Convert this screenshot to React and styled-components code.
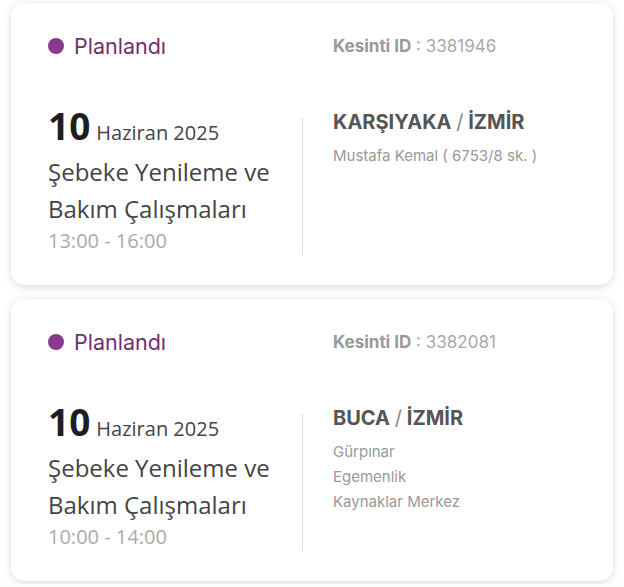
import React from "react";
import styled, { createGlobalStyle } from "styled-components";

const GlobalStyle = createGlobalStyle`
  html, body {
    margin: 0;
    padding: 0;
    background: #ffffff;
  }
`;

const List = styled.div`
  display: flex;
  flex-direction: column;
  gap: 14px;
  padding: 3px 11px;
`;

const Card = styled.div`
  background: #fff;
  border-radius: 14px;
  box-shadow: 0 2px 8px rgba(0, 0, 0, 0.14);
  padding: 28px 37px 30px 37px;
`;

const TopRow = styled.div`
  display: grid;
  grid-template-columns: 254px 1fr;
  align-items: center;
  height: 30px;
`;

const Status = styled.div`
  display: flex;
  align-items: center;
  gap: 10px;
  font-family: "Inter", "Lato", sans-serif;
  font-size: 21.5px;
  color: #6f2f72;
`;

const Dot = styled.span`
  width: 16px;
  height: 16px;
  border-radius: 50%;
  background: #8a3a8e;
`;

const OutageId = styled.div`
  padding-left: 31px;
  font-family: "Inter", "Lato", sans-serif;
  font-size: 17px;
  color: #aaa;

  b {
    color: #999;
    font-weight: 700;
  }
`;

const BodyRow = styled.div`
  display: grid;
  grid-template-columns: 254px 1px 1fr;
  margin-top: 45px;
`;

const DateCol = styled.div`
  font-family: "Open Sans", "Noto Sans", sans-serif;
  color: #444;
`;

const DateLine = styled.div`
  display: flex;
  align-items: baseline;
  gap: 6px;
  line-height: 40px;
`;

const Day = styled.span`
  font-size: 37px;
  font-weight: 700;
  color: #1e1e1e;
`;

const Month = styled.span`
  font-size: 20px;
  color: #444;
`;

const Title = styled.div`
  font-size: 24px;
  line-height: 37px;
  color: #444;
`;

const Time = styled.div`
  font-size: 20px;
  line-height: 28px;
  color: #aaa;
`;

const Divider = styled.div`
  background: #ddd;
  margin-top: 12px;
`;

const PlaceCol = styled.div`
  padding-left: 30px;
  font-family: "Inter", "Lato", sans-serif;
`;

const Place = styled.div`
  font-size: 20px;
  font-weight: 700;
  line-height: 32px;
  color: #555;
  margin-bottom: 5px;

  span {
    font-weight: 400;
    color: #888;
  }
`;

const Street = styled.div`
  font-size: 15px;
  line-height: 25px;
  color: #999;
`;

const outages = [
  {
    id: "3381946",
    day: "10",
    month: "Haziran 2025",
    title: "Şebeke Yenileme ve Bakım Çalışmaları",
    time: "13:00 - 16:00",
    district: "KARŞIYAKA",
    city: "İZMİR",
    streets: ["Mustafa Kemal ( 6753/8 sk. )"],
  },
  {
    id: "3382081",
    day: "10",
    month: "Haziran 2025",
    title: "Şebeke Yenileme ve Bakım Çalışmaları",
    time: "10:00 - 14:00",
    district: "BUCA",
    city: "İZMİR",
    streets: ["Gürpınar", "Egemenlik", "Kaynaklar Merkez"],
  },
];

const OutageCard = ({ item }) => (
  <Card>
    <TopRow>
      <Status>
        <Dot />
        Planlandı
      </Status>
      <OutageId>
        <b>Kesinti ID</b> : {item.id}
      </OutageId>
    </TopRow>
    <BodyRow>
      <DateCol>
        <DateLine>
          <Day>{item.day}</Day>
          <Month>{item.month}</Month>
        </DateLine>
        <Title>{item.title}</Title>
        <Time>{item.time}</Time>
      </DateCol>
      <Divider />
      <PlaceCol>
        <Place>
          {item.district} <span>/</span> {item.city}
        </Place>
        {item.streets.map((s) => (
          <Street key={s}>{s}</Street>
        ))}
      </PlaceCol>
    </BodyRow>
  </Card>
);

export default function App() {
  return (
    <>
      <GlobalStyle />
      <List>
        {outages.map((o) => (
          <OutageCard key={o.id} item={o} />
        ))}
      </List>
    </>
  );
}
